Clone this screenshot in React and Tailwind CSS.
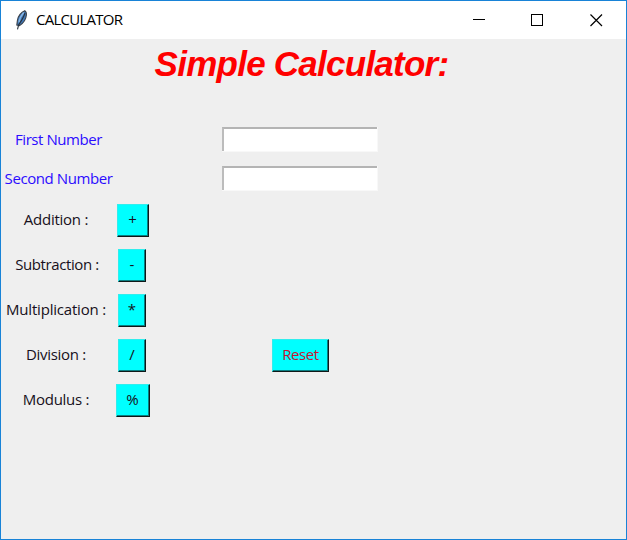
const operations = [
  { label: 'Addition :', symbol: '+', labelStyle: 'tracking-[-0.25px]', buttonStyle: 'w-8' },
  { label: 'Subtraction :', symbol: '-', labelStyle: 'tracking-[-0.4px] pl-0.5', buttonStyle: 'w-7' },
  { label: 'Multiplication :', symbol: '*', labelStyle: 'tracking-[-0.2px]', buttonStyle: 'w-7' },
  { label: 'Division :', symbol: '/', labelStyle: 'tracking-[-0.3px]', buttonStyle: 'w-7' },
  { label: 'Modulus :', symbol: '%', labelStyle: 'tracking-[-0.25px]', buttonStyle: 'w-[34px]' },
];

function TkButton({ className, children }) {
  return (
    <button
      className={`h-[33px] shrink-0 border border-t-[#30eeee] border-l-[#30eeee] border-r-[#101818] border-b-[#101818] bg-[#00ffff] pb-0.5 text-center leading-[29px] shadow-[inset_-1px_-1px_0_#087f82] ${className}`}
    >
      {children}
    </button>
  );
}

function Feather() {
  return (
    <svg className="ml-[14px] shrink-0" width="14" height="21" viewBox="0 0 14 21">
      <path d="M9.8 .7 C6.5 2 2.8 6 2.4 10.5 L1.8 15 L4.6 15.6 C8.5 13 11 9.5 11.4 5 C11.5 3 11 1.3 9.8 .7Z" fill="#3f78b8" stroke="#3a4048" strokeWidth="1.1" />
      <path d="M8.7 2.5 C6.5 5 4.5 9 4 12.5" fill="none" stroke="#86b4e4" strokeWidth="1.5" />
      <path d="M10 3 C8.5 8 5.5 12 3.6 15 L2.5 19.3" fill="none" stroke="#27303b" strokeWidth="1.1" />
    </svg>
  );
}

function Field({ label, className }) {
  return (
    <div className="flex h-[25px] items-center">
      <label className={`w-[115px] text-center whitespace-nowrap text-[#2b0cff] ${className}`}>{label}</label>
      <span className="ml-[106px] flex h-[25px] w-[156px] border-r border-b border-[#f8f8f8]">
        <input
          aria-label={label}
          className="w-full border-t-2 border-l-2 border-t-[#b4b4b4] border-l-[#bcbcbc] bg-white outline-none"
        />
      </span>
    </div>
  );
}

export default function App() {
  return (
    <div className="flex h-[540px] w-[627px] flex-col overflow-hidden border border-[#1883d7] bg-[#efefef] font-['Open_Sans','Noto_Sans',sans-serif] text-[15px] text-[#171020]">
      <header className="flex h-[38px] shrink-0 items-center bg-white">
        <Feather />
        <span className="ml-[7px] grow pb-0.5 text-[15px] leading-5 tracking-[-0.75px] text-black">CALCULATOR</span>
        <svg className="mr-[23px] shrink-0" width="130" height="14" viewBox="0 0 130 14" fill="none" stroke="#000" shapeRendering="crispEdges">
          <path d="M0 6.5H12" />
          <rect x="58.5" y="1.5" width="11" height="11" />
          <path d="M117.5 1.5L129 13M129 1.5L117.5 13" shapeRendering="auto" strokeWidth="1.2" />
        </svg>
      </header>
      <h1 className="mt-1 h-[42px] w-[601px] shrink-0 text-center font-['Liberation_Sans',sans-serif] text-[35px] leading-[42px] font-bold tracking-[-0.75px] italic text-[#ff0000]">
        Simple Calculator:
      </h1>
      <div className="mt-[42px] flex flex-col gap-[14px]">
        <Field label="First Number" className="tracking-[-0.42px]" />
        <Field label="Second Number" className="tracking-[-0.42px]" />
      </div>
      <div className="mt-[13px] flex flex-col gap-3">
        {operations.map((op) => (
          <div key={op.symbol} className="flex items-center">
            <span className={`w-[110px] pb-0.5 text-center whitespace-nowrap ${op.labelStyle}`}>{op.label}</span>
            <div className={`flex w-[43px] ${op.buttonStyle === 'w-7' ? 'justify-start pl-[7px]' : 'justify-center'}`}>
              <TkButton className={op.buttonStyle}>{op.symbol}</TkButton>
            </div>
            {op.symbol === '/' && <TkButton className="ml-[118px] w-[57px] tracking-[-0.4px] text-[#c61432]">Reset</TkButton>}
          </div>
        ))}
      </div>
    </div>
  );
}
